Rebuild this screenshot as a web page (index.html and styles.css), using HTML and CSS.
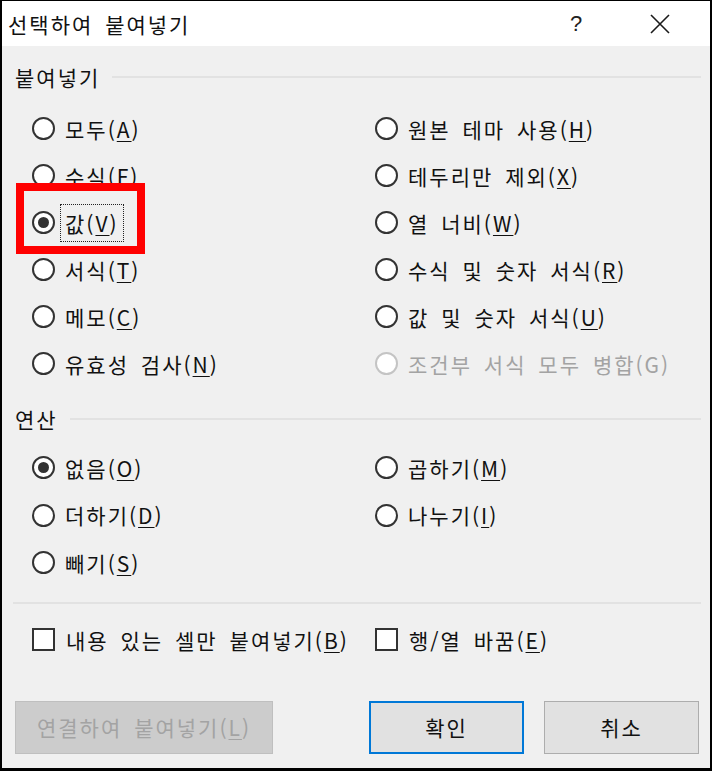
FILE: index.html
```html
<!DOCTYPE html>
<html lang="ko">
  <head>
    <meta charset="UTF-8" />
    <meta name="viewport" content="width=device-width, initial-scale=1.0" />
    <title>선택하여 붙여넣기</title>
    <link rel="stylesheet" href="styles.css">
  </head>
  <body>
    <div class="dialog">

      <div class="titlebar">
        <span class="title">선택하여 붙여넣기</span>
        <span class="help">?</span>
        <span class="close">
          <svg width="22" height="22" viewBox="0 0 22 22">
            <path d="M2 2 L20 20 M20 2 L2 20" stroke="#1a1a1a" stroke-width="1.6" fill="none" />
          </svg>
        </span>
      </div>

      <div class="content">
        <div class="group-heading">
          <span>붙여넣기</span>
          <div class="rule"></div>
        </div>

        <div class="options paste-options">
          <label class="option"><span class="radio"></span><span>모두(<u>A</u>)</span></label>
          <label class="option"><span class="radio"></span><span>원본 테마 사용(<u>H</u>)</span></label>
          <label class="option"><span class="radio"></span><span>수식(<u>F</u>)</span></label>
          <label class="option"><span class="radio"></span><span>테두리만 제외(<u>X</u>)</span></label>
          <label class="option">
            <span class="radio checked"></span><span class="focus">값(<u>V</u>)</span>
            <span class="highlight"></span>
          </label>
          <label class="option"><span class="radio"></span><span>열 너비(<u>W</u>)</span></label>
          <label class="option"><span class="radio"></span><span>서식(<u>T</u>)</span></label>
          <label class="option"><span class="radio"></span><span>수식 및 숫자 서식(<u>R</u>)</span></label>
          <label class="option"><span class="radio"></span><span>메모(<u>C</u>)</span></label>
          <label class="option"><span class="radio"></span><span>값 및 숫자 서식(<u>U</u>)</span></label>
          <label class="option"><span class="radio"></span><span>유효성 검사(<u>N</u>)</span></label>
          <label class="option disabled"><span class="radio"></span><span>조건부 서식 모두 병합(G)</span></label>
        </div>

        <div class="group-heading op-heading">
          <span>연산</span>
          <div class="rule"></div>
        </div>

        <div class="options op-options">
          <label class="option"><span class="radio checked"></span><span>없음(<u>O</u>)</span></label>
          <label class="option"><span class="radio"></span><span>곱하기(<u>M</u>)</span></label>
          <label class="option"><span class="radio"></span><span>더하기(<u>D</u>)</span></label>
          <label class="option"><span class="radio"></span><span>나누기(<u>I</u>)</span></label>
          <label class="option"><span class="radio"></span><span>빼기(<u>S</u>)</span></label>
        </div>

        <div class="separator"></div>

        <div class="options checks">
          <label class="option"><span class="checkbox"></span><span>내용 있는 셀만 붙여넣기(<u>B</u>)</span></label>
          <label class="option"><span class="checkbox"></span><span>행/열 바꿈(<u>E</u>)</span></label>
        </div>

        <div class="buttons">
          <button class="btn link-btn" disabled>연결하여 붙여넣기(<u>L</u>)</button>
          <button class="btn default-btn">확인</button>
          <button class="btn">취소</button>
        </div>
      </div>

    </div>
  </body>
</html>
```

FILE: styles.css
```css
/* ---- RESET ---- */
* {
  padding: 0;
  margin: 0;
  box-sizing: border-box;
}

body {
  font-family: "Noto Sans CJK KR", "Noto Sans", sans-serif;
  font-size: 21px;
  letter-spacing: 2px;
  word-spacing: 4px;
  color: #111;
}

/* ---- WINDOW ---- */
.dialog {
  width: 712px;
  height: 771px;
  display: flex;
  flex-direction: column;

  background: #f0f0f0;
  border-style: solid;
  border-color: #000;
  border-width: 1px 2px 3px 2px;
  overflow: hidden;
}

.titlebar {
  display: flex;
  align-items: center;
  height: 45px;
  padding: 0 30px 0 6px;
  background: #ffffff;
  flex-shrink: 0;
}

.title {
  flex: 1;
  line-height: 30px;
}

.help {
  width: 40px;
  text-align: center;
  margin-right: 44px;
  font-family: "Liberation Sans", sans-serif;
  font-size: 22px;
  letter-spacing: 0;
  color: #222;
}

.close {
  width: 40px;
  display: flex;
  justify-content: center;
}

/* ---- CONTENT ---- */
.content {
  padding: 0 9px 0 11px;
}

.group-heading {
  display: flex;
  align-items: center;
  gap: 12px;
  height: 30px;
  margin-top: 16px;
  padding-left: 2px;
}

.op-heading {
  margin-top: 17px;
}

.rule {
  flex: 1;
  height: 2px;
  background: #e2e2e2;
}

.options {
  display: grid;
  grid-template-columns: 343px 1fr;
  margin-left: 19px;
}

.paste-options {
  grid-auto-rows: 47px;
  margin-top: 13px;
}

.op-options {
  grid-auto-rows: 47.5px;
  margin-top: 10px;
}

.option {
  position: relative;
  display: flex;
  align-items: center;
  gap: 10px;
  white-space: nowrap;
}

.option u,
.btn u {
  text-decoration-thickness: 1px;
  text-underline-offset: 3px;
}

/* ---- RADIO / CHECKBOX ---- */
.radio {
  width: 23px;
  height: 23px;
  border: 2px solid #333;
  border-radius: 50%;
  background: #fff;
  flex-shrink: 0;
  display: flex;
  align-items: center;
  justify-content: center;
}

.radio.checked::after {
  content: "";
  width: 11px;
  height: 11px;
  border-radius: 50%;
  background: #333;
}

.checkbox {
  width: 23px;
  height: 23px;
  border: 2px solid #333;
  background: #fff;
  flex-shrink: 0;
  margin-right: 1px;
}

.disabled {
  color: #a3a3a3;
}

.disabled .radio {
  border-color: #c4c4c4;
}

.focus {
  outline: 1px dotted #222;
  padding: 3px 4px;
  margin: 0 -4px;
}

/* red annotation frame */
.highlight {
  position: absolute;
  left: -16px;
  top: -16px;
  width: 129px;
  height: 71px;
  border: 8px solid #ff0000;
}

.separator {
  height: 2px;
  margin-top: 15px;
  background: #e2e2e2;
}

.checks {
  grid-auto-rows: 30px;
  margin-top: 21px;
}

/* ---- BUTTONS ---- */
.buttons {
  display: flex;
  gap: 20px;
  margin-top: 46px;
  padding-right: 2px;
}

.btn {
  height: 53px;
  width: 155px;
  font-family: inherit;
  font-size: 21px;
  letter-spacing: 2px;
  word-spacing: 4px;
  color: #111;
  background: #e1e1e1;
  border: 1px solid #adadad;
}

.link-btn {
  width: 258px;
  margin-left: 2px;
  margin-right: auto;
  background: #cccccc;
  border-color: #bfbfbf;
  color: #a3a3a3;
}

.default-btn {
  border: 2px solid #0078d7;
}
```
